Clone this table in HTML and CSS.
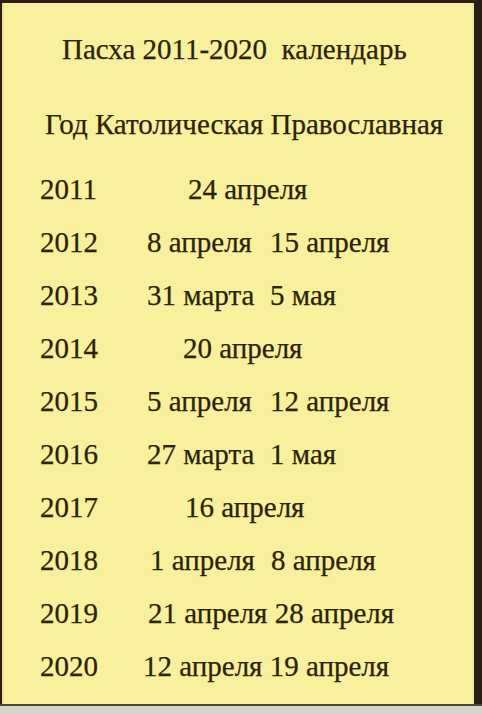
FILE: index.html
```html
<!DOCTYPE html>
<html lang="ru">
<head>
<meta charset="utf-8">
<title>Пасха 2011-2020 календарь</title>
<link rel="stylesheet" href="styles.css">
</head>
<body>
<div class="card">
  <div class="title">Пасха 2011-2020&nbsp; календарь</div>
  <div class="head">Год Католическая Православная</div>
  <div class="row"><span class="year">2011</span><span class="one o1">24 апреля</span></div>
  <div class="row"><span class="year">2012</span><span class="cat">8 апреля</span><span class="orth">15 апреля</span></div>
  <div class="row"><span class="year">2013</span><span class="cat">31 марта</span><span class="orth">5 мая</span></div>
  <div class="row"><span class="year">2014</span><span class="one o2">20 апреля</span></div>
  <div class="row"><span class="year">2015</span><span class="cat">5 апреля</span><span class="orth">12 апреля</span></div>
  <div class="row"><span class="year">2016</span><span class="cat">27 марта</span><span class="orth">1 мая</span></div>
  <div class="row"><span class="year">2017</span><span class="one o3">16 апреля</span></div>
  <div class="row"><span class="year">2018</span><span class="cat c18">1 апреля</span><span class="orth">8 апреля</span></div>
  <div class="row"><span class="year">2019</span><span class="both">21 апреля 28 апреля</span></div>
  <div class="row"><span class="year">2020</span><span class="both b20">12 апреля 19 апреля</span></div>
</div>
<div class="foot"></div>
</body>
</html>
```
FILE: styles.css
```css
html, body {
  margin: 0;
  padding: 0;
}
body {
  width: 482px;
  height: 714px;
  overflow: hidden;
  background: #2a1d12;
  font-family: "Liberation Serif", "DejaVu Serif", serif;
  color: #2b2207;
  font-size: 29px;
  -webkit-text-stroke: 0.25px #2b2207;
}
.card {
  margin: 3px 8px 0 2px;
  height: 701px;
  background: #f8f09c;
  box-sizing: border-box;
  padding-top: 20px;
  border-left: 2px solid #eae38e;
  border-right: 2px solid #efe796;
}
.title {
  height: 75px;
  line-height: 53px;
  padding-left: 58px;
  white-space: pre;
}
.head {
  height: 65px;
  line-height: 53px;
  padding-left: 41px;
}
.row {
  display: flex;
  height: 53px;
  line-height: 53px;
  padding-left: 36px;
  white-space: nowrap;
}
.year {
  width: 107px;
}
.cat {
  width: 123px;
}
.c18 {
  padding-left: 3px;
  width: 121px;
}
.one.o1 { padding-left: 41px; }
.one.o2 { padding-left: 36px; }
.one.o3 { padding-left: 38px; }
.both { padding-left: 1px; }
.both.b20 { padding-left: 0; margin-left: -4px; }
.foot {
  height: 10px;
  background: #d4d4cc;
  border-top: 2px solid #4a4636;
  box-sizing: border-box;
}
```
